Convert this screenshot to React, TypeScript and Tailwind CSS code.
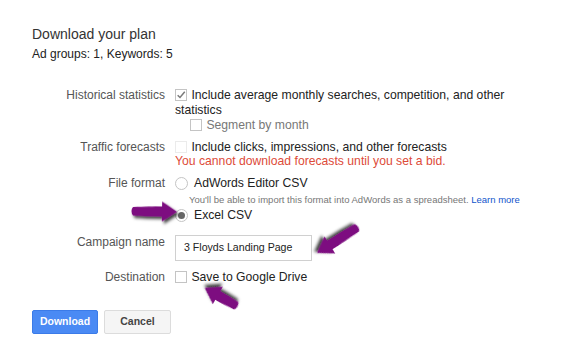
import React from "react";

function Box({ checked = false, faint = false }: { checked?: boolean; faint?: boolean }) {
  return (
    <span
      className={`inline-flex items-center justify-center w-[12px] h-[12px] border bg-white align-[-2px] ${
        faint ? "border-[#ebebeb]" : "border-[#c4c4c4]"
      }`}
    >
      {checked && (
        <svg width="12" height="12" viewBox="0 0 12 12">
          <path d="M2 6.2 L4.8 9 L10.5 2" fill="none" stroke="#7a7a7a" strokeWidth="1.8" />
        </svg>
      )}
    </span>
  );
}

function Radio({ checked = false }: { checked?: boolean }) {
  return (
    <span className="inline-flex items-center justify-center w-[13px] h-[13px] rounded-full border border-[#c4c4c4] bg-white">
      {checked && <span className="w-[7px] h-[7px] rounded-full bg-[#666]" />}
    </span>
  );
}

function Row({ label, children, className = "" }: { label: string; children: React.ReactNode; className?: string }) {
  return (
    <div className={`flex ${className}`}>
      <div className="w-[133px] shrink-0 text-right text-[#555] text-[12px] leading-[15px]">{label}</div>
      <div className="ml-[10px] w-[350px] text-[12.2px]">{children}</div>
    </div>
  );
}

function Arrow({ x, y, len, angle }: { x: number; y: number; len: number; angle: number }) {
  const h = len - 15;
  const d = `M0,-4 C${h * 0.4},-4.5 ${h * 0.7},-5 ${h},-5 L${h},-10 L${len},0 L${h},10 L${h},5 C${h * 0.7},5 ${h * 0.4},5 0,4.5 C-2,2 -2,-2 0,-4 Z`;
  return <path d={d} transform={`translate(${x} ${y}) rotate(${angle})`} fill="#7d0c80" filter="url(#sh)" />;
}

export default function App() {
  return (
    <div className="relative w-[583px] h-[357px] bg-white pl-[32px] pt-[25px] text-[#222] font-['Liberation_Sans',Arial,sans-serif]">
      <div className="text-[14px] leading-[18px] text-[#333]">Download your plan</div>
      <div className="mt-[4px] text-[12px] leading-[15px] text-[#222]">Ad groups: 1, Keywords: 5</div>

      <Row label="Historical statistics" className="mt-[26px]">
        <div className="leading-[15px]">
          <Box checked /> <span className="ml-[1px]">Include average monthly searches, competition, and other statistics</span>
        </div>
        <div className="ml-[15px] leading-[15px] text-[#777]">
          <Box /> <span className="ml-[1px]">Segment by month</span>
        </div>
      </Row>

      <Row label="Traffic forecasts" className="mt-[7px]">
        <div className="leading-[15px]">
          <Box faint /> <span className="ml-[1px]">Include clicks, impressions, and other forecasts</span>
        </div>
        <div className="leading-[13px] text-[#dd4b39]">You cannot download forecasts until you set a bid.</div>
      </Row>

      <Row label="File format" className="mt-[8px]">
        <div className="flex items-center gap-[6px] leading-[15px]">
          <Radio />
          <span>AdWords Editor CSV</span>
        </div>
        <div className="mt-[2px] ml-[14px] text-[9.5px] leading-[13px] text-[#777] whitespace-nowrap">
          You'll be able to import this format into AdWords as a spreadsheet.{" "}
          <span className="text-[#1155cc]">Learn more</span>
        </div>
        <div className="mt-[2px] flex items-center gap-[6px] leading-[15px]">
          <Radio checked />
          <span>Excel CSV</span>
        </div>
      </Row>

      <Row label="Campaign name" className="mt-[12px]">
        <div className="w-[137px] h-[26px] border border-[#d0d0d0] flex items-center pl-[8px] text-[10.6px] text-[#222]">
          3 Floyds Landing Page
        </div>
      </Row>

      <Row label="Destination" className="mt-[9px]">
        <div className="leading-[15px]">
          <Box /> <span className="ml-[1px]">Save to Google Drive</span>
        </div>
      </Row>

      <div className="mt-[25px] flex gap-[6px]">
        <button className="w-[66px] h-[24px] rounded-[2px] bg-[#4a8af4] border border-[#3b7be8] text-white text-[10.5px] font-bold">
          Download
        </button>
        <button className="w-[67px] h-[24px] rounded-[2px] bg-[#f5f5f5] border border-[#dcdcdc] text-[#444] text-[10.5px] font-bold">
          Cancel
        </button>
      </div>

      <svg className="absolute left-0 top-0 pointer-events-none" width="583" height="357">
        <defs>
          <filter id="sh" x="-30%" y="-60%" width="160%" height="220%">
            <feDropShadow dx="2" dy="2.5" stdDeviation="1.5" floodColor="#000" floodOpacity="0.75" />
          </filter>
        </defs>
        <Arrow x={133} y={211} len={44} angle={1} />
        <Arrow x={357} y={228} len={47} angle={148} />
        <Arrow x={236} y={306} len={36} angle={210} />
      </svg>
    </div>
  );
}
